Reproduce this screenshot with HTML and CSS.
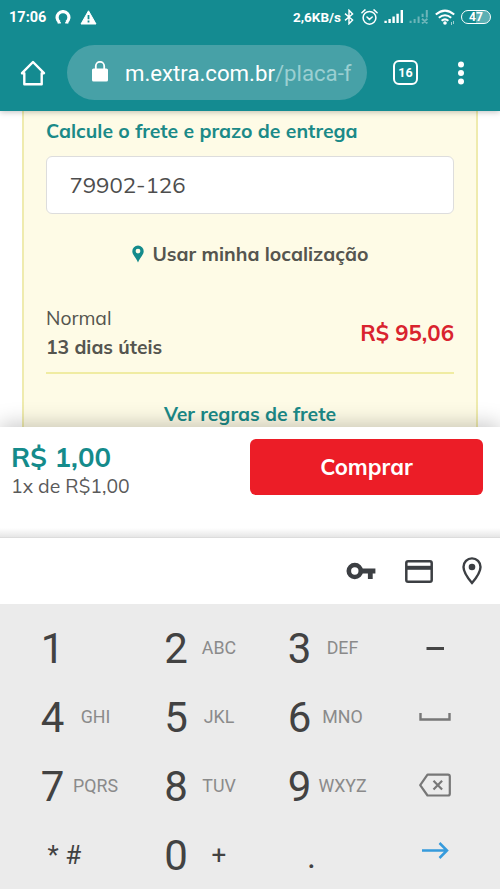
FILE: index.html
```html
<!DOCTYPE html>
<html lang="pt-BR">
<head>
<meta charset="utf-8">
<title>Extra - Frete</title>
<link rel="stylesheet" href="styles.css">
</head>
<body>
<div class="phone">
  <header class="top">
    <div class="status">
      <span class="clock">17:06</span>
      <svg class="s-ring" width="16" height="14" viewBox="0 0 16 14"><path d="M4.6 12.3A5.9 5.9 0 1 1 11.4 12.3" fill="none" stroke="#fff" stroke-width="3.2"/><path d="M2.6 12.8h3.2M10.2 12.8h3.2" stroke="#fff" stroke-width="1.6"/></svg>
      <svg class="s-warn" width="17" height="15" viewBox="0 0 17 15"><path d="M8.5.8 16 14H1z" fill="#fff" stroke="#fff" stroke-linejoin="round"/><path d="M8.5 5v4.2M8.5 10.6v1.9" stroke="#148b91" stroke-width="1.8"/></svg>
      <span class="speed">2,6KB/s</span>
      <svg class="s-bt" width="10" height="16" viewBox="0 0 10 16"><path d="M1 4.6 8.6 11 5 14.8V1.2L8.6 5 1 11.4" fill="none" stroke="#fff" stroke-width="1.4"/></svg>
      <svg class="s-alarm" width="17" height="16" viewBox="0 0 17 16"><g fill="none" stroke="#fff" stroke-width="1.5" stroke-linecap="round"><circle cx="8.5" cy="8.8" r="6.400"/><path d="M.9 3.8 4 .9M16.1 3.8 13 .9M6 8l2.4 2.4L11.2 8"/></g></svg>
      <svg class="s-sig" width="20" height="14" viewBox="0 0 20 14"><path d="M1.6 10.8V13M5.6 9v4M9.6 6.6V13M13.6 3.8V13M17.8 0V13" stroke="#fff" stroke-width="2.4"/></svg>
      <svg class="s-sig2" width="20" height="14" viewBox="0 0 20 14"><path d="M1.6 10.8V13M5.6 9v4M9.6 6.6V13M13.6 3.8V7M17.8 0V7.6M13 8.8l5.4 4.6M18.4 8.8 13 13.4" stroke="#6db5b9" stroke-width="2"/></svg>
      <svg class="s-wifi" width="21" height="17" viewBox="0 0 21 17"><g fill="none" stroke="#fff" stroke-width="2"><path d="M.8 5.6q9.200-8 18.400 0M3.800 8.800q6.200-5.200 12.400 0M6.600 11.800q3.400-2.800 6.800 0"/></g><circle cx="10" cy="14" r="1.800" fill="#fff"/><path d="M16.500 13v3M18.500 12v3" stroke="#9fd0d2"/></svg>
      <span class="battery">47</span>
    </div>
    <div class="browser">
      <svg class="home" width="26" height="26" viewBox="0 0 26 26"><path d="M2 13.200 13 2l11 11.200H21.700V24.300H4.300V13.200z" fill="none" stroke="#fff" stroke-width="2.400" stroke-linejoin="round"/></svg>
      <div class="url">
        <svg width="16" height="21" viewBox="0 0 16 21"><rect y="7.500" width="16" height="13" rx="1.600" fill="#fff"/><path d="M3.800 8V5a4.200 4.200 0 0 1 8.400 0v3" fill="none" stroke="#fff" stroke-width="1.800"/></svg>
        <span class="addr">m.extra.com.br<i>/placa-f</i></span>
      </div>
      <span class="tabs">16</span>
      <svg class="dots" width="8" height="24" viewBox="0 0 8 24"><g fill="#fff"><circle cx="4" cy="3.400" r="3"/><circle cx="4" cy="12" r="3"/><circle cx="4" cy="20.600" r="3"/></g></svg>
    </div>
  </header>

  <main class="page">
    <section class="freight">
      <h1>Calcule o frete e prazo de entrega</h1>
      <div class="cep">79902-126</div>
      <div class="locate">
        <svg width="12" height="18" viewBox="0 0 12 18"><path fill-rule="evenodd" d="M6 .5A5.700 5.700 0 0 0 .3 6.200C.3 10 4.500 13 6 17.500 7.500 13 11.700 10 11.700 6.200A5.700 5.700 0 0 0 6 .5zM6 3.700a2.400 2.400 0 1 1 0 4.800 2.400 2.400 0 0 1 0-4.800z" fill="#148b8b"/></svg>
        <span>Usar minha localização</span>
      </div>
      <div class="option">
        <div class="kind"><span>Normal</span><b>13 dias úteis</b></div>
        <strong>R$ 95,06</strong>
      </div>
      <div class="rules">Ver regras de frete</div>
    </section>
  </main>

  <section class="buy">
    <div class="total"><b>R$ 1,00</b><span>1x de R$1,00</span></div>
    <div class="btn">Comprar</div>
  </section>

  <section class="autofill">
    <svg width="30" height="18" viewBox="0 0 30 18"><circle cx="8.800" cy="9" r="6" fill="none" stroke="#3c3f43" stroke-width="4.600"/><path d="M15 9H29.400M24.300 9v8" fill="none" stroke="#3c3f43" stroke-width="4.800"/></svg>
    <svg width="28" height="23" viewBox="0 0 28 23"><rect x="1.300" y="1.300" width="25.400" height="20.400" rx="1.800" fill="none" stroke="#3c3f43" stroke-width="2.500"/><path d="M1 7.800h26" stroke="#3c3f43" stroke-width="4"/></svg>
    <svg width="20" height="28" viewBox="0 0 20 28"><path d="M10 1.400A8.500 8.500 0 0 0 1.500 10C1.500 16 10 26 10 26S18.500 16 18.500 10A8.500 8.500 0 0 0 10 1.400z" fill="none" stroke="#3c3f43" stroke-width="2.400"/><circle cx="10" cy="10" r="3.300" fill="#3c3f43"/></svg>
  </section>

  <section class="keys">
    <div class="key"><b>1</b></div>
    <div class="key"><b>2</b><span>ABC</span></div>
    <div class="key"><b>3</b><span>DEF</span></div>
    <div class="fn"><svg width="34" height="30" viewBox="0 0 34 30"><path d="M8.500 14.500h17.500" stroke="#454545" stroke-width="3"/></svg></div>
    <div class="key"><b>4</b><span>GHI</span></div>
    <div class="key"><b>5</b><span>JKL</span></div>
    <div class="key"><b>6</b><span>MNO</span></div>
    <div class="fn"><svg width="34" height="30" viewBox="0 0 34 30"><path d="M2.500 10v6.500h29V10" fill="none" stroke="#777" stroke-width="2.400"/></svg></div>
    <div class="key"><b>7</b><span>PQRS</span></div>
    <div class="key"><b>8</b><span>TUV</span></div>
    <div class="key"><b>9</b><span>WXYZ</span></div>
    <div class="fn"><svg width="34" height="30" viewBox="0 0 34 30"><path d="M9.500 2.700h20.500q1.800 0 1.800 1.800v17.200q0 1.800-1.800 1.800H9.500L2.200 13.100zM15.500 8.700l8.600 8.800M24.100 8.700l-8.600 8.800" fill="none" stroke="#777" stroke-width="2.200" stroke-linejoin="round"/></svg></div>
    <div class="key sym"><em>* #</em></div>
    <div class="key zero"><b>0</b><span>+</span></div>
    <div class="key dot"><em>.</em></div>
    <div class="fn go"><svg width="34" height="30" viewBox="0 0 34 30"><path d="M4 14.500h25M21.500 7 29 14.500l-7.500 7.500" fill="none" stroke="#369bdc" stroke-width="2.500"/></svg></div>
  </section>
</div>
</body>
</html>
```
FILE: styles.css
```css
* { box-sizing: border-box; }
body { margin: 0; overflow: hidden; background: #fff; font-family: Mulish, "Open Sans", sans-serif; }
svg { display: block; flex: none; }
.phone { width: 500px; height: 889px; display: flex; flex-direction: column; overflow: hidden; }

.top { flex: none; height: 111px; background: #148b91; color: #fff; font-family: Roboto, sans-serif; position: relative; z-index: 1; box-shadow: 0 1px 6px rgba(0, 0, 0, .25); }
.status { height: 34px; display: flex; align-items: center; padding-left: 9px; }
.clock { width: 37px; font: 700 14.500px Roboto, sans-serif; }
.s-ring { margin-left: 9px; }
.s-warn { margin-left: 9px; }
.speed { width: 49px; margin-left: 196px; font: 700 13.500px Roboto, sans-serif; white-space: nowrap; }
.s-bt { margin-left: 2px; }
.s-alarm { margin-left: 7px; }
.s-sig { margin-left: 6px; }
.s-sig2 { margin-left: 5px; }
.s-wifi { margin-left: 6px; }
.battery { width: 30px; height: 14px; margin-left: 5px; border: 1.500px solid #fff; border-radius: 7px; background: linear-gradient(90deg, #148b91 50%, #5bafb3 50%); font-size: 12px; font-weight: 700; line-height: 12px; text-align: center; }

.browser { height: 77px; display: flex; align-items: center; padding-left: 20px; }
.url { width: 300px; height: 55px; margin-left: 21px; padding-left: 25px; border-radius: 28px; background: #47a1a7; display: flex; align-items: center; }
.url svg { margin-top: -2px; }
.addr { margin-left: 17px; font-size: 22.200px; line-height: 28px; white-space: nowrap; }
.addr i { font-style: normal; color: #9bcfd1; }
.tabs { width: 25px; height: 25px; margin-left: 26px; border: 2.500px solid #fff; border-radius: 6px; font-size: 12.500px; font-weight: 700; line-height: 21px; text-align: center; }
.dots { margin-left: 39px; }

.page { flex: none; height: 316px; overflow: hidden; padding: 0 22px; }
.freight { height: 330px; padding: 7px 22px 0; background: #fefbe6; border: solid #efebae; border-width: 0 2px; color: #55554f; }
.freight h1 { margin: 0; font-size: 19.400px; font-weight: 700; line-height: 26px; color: #1b8a88; white-space: nowrap; }
.cep { height: 58px; margin-top: 12px; padding-left: 22.500px; border: 1.500px solid #ddd; border-radius: 6px; background: #fff; color: #4d4d4d; font-size: 22.200px; line-height: 57px; }
.locate { height: 26px; margin-top: 27px; padding-left: 1px; display: flex; align-items: center; justify-content: center; gap: 8px; font-weight: 700; font-size: 19.400px; line-height: 26px; }
.option { margin-top: 37px; padding-bottom: 10px; border-bottom: 2px solid #f0eca2; display: flex; justify-content: space-between; align-items: center; }
.kind { display: flex; flex-direction: column; font-size: 19.300px; line-height: 29px; }
.kind b { font-weight: 700; }
.option strong { color: #d9232e; font-size: 22.200px; font-weight: 700; line-height: 30px; }
.rules { margin-top: 27px; text-align: center; color: #1b8a88; font-weight: 700; font-size: 19.400px; line-height: 26px; }

.buy { flex: none; height: 110px; padding: 12px 17px 0 11px; display: flex; justify-content: space-between; background: linear-gradient(#fff 101px, #e6e6e6); position: relative; box-shadow: 0 -3px 20px rgba(0, 0, 0, .22); }
.total { display: flex; flex-direction: column; color: #5a5a5a; font-size: 19.400px; line-height: 24px; padding-top: 1px; }
.total b { color: #148b8b; font-size: 27.600px; font-weight: 700; line-height: 34px; }
.btn { width: 233px; height: 56px; border-radius: 6px; background: #ec1d27; color: #fff; text-align: center; font-size: 22.200px; font-weight: 700; line-height: 57px; }

.autofill { flex: none; height: 67px; padding: 0 18px 0 346px; display: flex; align-items: center; justify-content: space-between; background: #fff; border-top: 1px solid #dcdcdc; position: relative; }

.keys { flex: none; height: 285px; padding-top: 10px; display: grid; grid-template-columns: 123.500px 123.500px 123.500px 129px; grid-template-rows: repeat(4, 69px); background: #ebebeb; color: #424242; font-family: Roboto, sans-serif; }
.key { display: grid; grid-template-columns: 40px 46px; padding-left: 32.500px; justify-items: center; line-height: 69px; }
.key b { font-size: 42px; font-weight: 400; }
.key span { font-size: 17.800px; color: #8a8a8a; line-height: 67.500px; }
.key em { font-style: normal; font-size: 26px; white-space: pre; }
.sym em { justify-self: start; margin-left: 15px; }
.key.zero span { font-size: 26px; line-height: 69px; color: #424242; }
.dot em { grid-column: 1 / 3; margin-right: 22px; font-size: 34px; line-height: 71px; }
.fn { display: flex; align-items: center; justify-content: center; }
.go { padding-bottom: 10px; }
```
